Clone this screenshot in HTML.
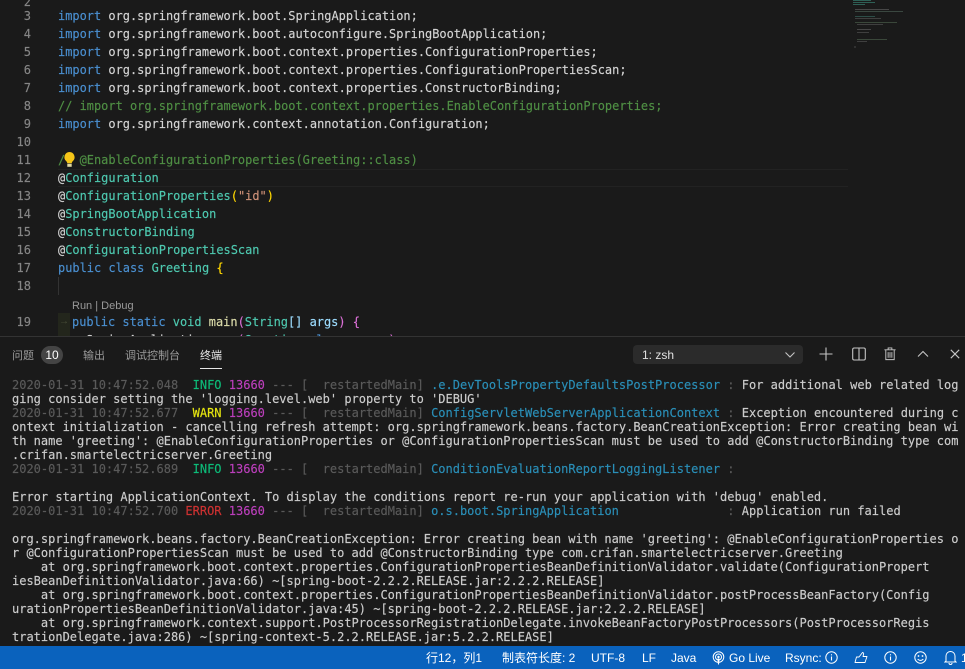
<!DOCTYPE html>
<html><head><meta charset="utf-8">
<style>
html,body{margin:0;padding:0;background:#1a1a1a;}
#r{position:relative;width:965px;height:669px;overflow:hidden;background:#1a1a1a;filter:blur(.3px);}
.m{font-family:"DejaVu Sans Mono","Liberation Mono",monospace;font-size:12px;white-space:pre;-webkit-text-stroke:.15px;}
.l{position:absolute;height:18px;line-height:18px;left:58px;color:#d4d4d4;font-size:11.96px;}
.n{position:absolute;left:0;width:31px;text-align:right;height:18px;line-height:18px;color:#858585;}
.k{color:#4a8fd0}.c{color:#4f8f44}.t{color:#4ec9b0}.y{color:#ffd700}.s{color:#ce9178}.f{color:#dcdcaa}.v{color:#9cdcfe}.p{color:#da70d6}
.u{font-family:"Liberation Sans","Noto Sans CJK SC",sans-serif;position:absolute;white-space:pre;}
.a{position:absolute;left:12px;height:14px;line-height:14px;color:#cccccc;}
.d{color:#5a5a5a}.i{color:#0dbc79}.wn{color:#e5e510}.e{color:#cd3131}.g{color:#bc3fbc}.b{color:#2a8fb8}
.st{position:absolute;top:647px;height:23px;line-height:23px;color:#fff;font-size:12px;}
svg{position:absolute;}
</style></head><body><div id="r">

<div class="n m" style="top:-7px">2</div>
<div class="n m" style="top:7px">3</div><div class="l m" style="top:7px"><span class="k">import</span> org.springframework.boot.SpringApplication;</div>
<div class="n m" style="top:25px">4</div><div class="l m" style="top:25px"><span class="k">import</span> org.springframework.boot.autoconfigure.SpringBootApplication;</div>
<div class="n m" style="top:43px">5</div><div class="l m" style="top:43px"><span class="k">import</span> org.springframework.boot.context.properties.ConfigurationProperties;</div>
<div class="n m" style="top:61px">6</div><div class="l m" style="top:61px"><span class="k">import</span> org.springframework.boot.context.properties.ConfigurationPropertiesScan;</div>
<div class="n m" style="top:79px">7</div><div class="l m" style="top:79px"><span class="k">import</span> org.springframework.boot.context.properties.ConstructorBinding;</div>
<div class="n m" style="top:97px">8</div><div class="l m c" style="top:97px">// import org.springframework.boot.context.properties.EnableConfigurationProperties;</div>
<div class="n m" style="top:115px">9</div><div class="l m" style="top:115px"><span class="k">import</span> org.springframework.context.annotation.Configuration;</div>
<div class="n m" style="top:133px">10</div>
<div class="n m" style="top:151px">11</div><div class="l m c" style="top:151px">/  @EnableConfigurationProperties(Greeting::class)</div>
<svg style="left:63px;top:151px" width="13" height="17" viewBox="0 0 13 17"><path d="M6.500 1a5.200 5.200 0 0 0-3.400 9c.8.8 1.100 1.400 1.100 2.300h4.600c0-.9.300-1.500 1.100-2.300a5.200 5.200 0 0 0-3.400-9z" fill="#f5c518"/><rect x="4.300" y="12.800" width="4.400" height="3" fill="#e0d8a0"/></svg>
<div style="position:absolute;left:58px;top:169px;width:790px;height:18px;box-sizing:border-box;border-top:1px solid #222;border-bottom:1px solid #222"></div>
<div class="n m" style="top:169px">12</div><div class="l m" style="top:169px">@<span class="t">Configuration</span></div>
<div class="n m" style="top:187px">13</div><div class="l m" style="top:187px">@<span class="t">ConfigurationProperties</span><span class="y">(</span><span class="s">"id"</span><span class="y">)</span></div>
<div class="n m" style="top:205px">14</div><div class="l m" style="top:205px">@<span class="t">SpringBootApplication</span></div>
<div class="n m" style="top:223px">15</div><div class="l m" style="top:223px">@<span class="t">ConstructorBinding</span></div>
<div class="n m" style="top:241px">16</div><div class="l m" style="top:241px">@<span class="t">ConfigurationPropertiesScan</span></div>
<div class="n m" style="top:259px">17</div><div class="l m" style="top:259px"><span class="k">public</span> <span class="k">class</span> <span class="t">Greeting</span> <span class="y">{</span></div>
<div class="n m" style="top:277px">18</div>
<div style="position:absolute;left:58px;top:277px;width:1px;height:18px;background:#333"></div>
<div class="u" style="left:72px;top:299px;font-size:11px;line-height:14px;color:#999">Run | Debug</div>
<div style="position:absolute;left:58px;top:313px;width:12px;height:23px;background:#23261c"></div>
<div class="u" style="left:59px;top:315px;font-size:10px;line-height:14px;color:#4a4f3a">→</div>
<div class="n m" style="top:313px">19</div><div class="l m" style="top:313px;left:72px"><span class="k">public</span> <span class="k">static</span> <span class="t">void</span> <span class="f">main</span><span class="p">(</span><span class="t">String</span><span class="v">[]</span> <span class="v">args</span><span class="p">)</span> <span class="p">{</span></div>
<div class="l m" style="top:331px;left:86px">SpringApplication.<span class="f">run</span><span class="p">(</span><span class="t">Greeting</span>.<span class="k">class</span>, <span class="v">args</span><span class="p">)</span>;</div>

<svg style="left:853px;top:0" width="56" height="50" viewBox="0 0 56 50">
<g opacity=".4">
<rect x="0" y="0" width="18" height="1" fill="#4ec9b0"/><rect x="0" y="2" width="22" height="1" fill="#4ec9b0"/><rect x="0" y="4" width="12" height="1" fill="#4ec9b0"/>
<rect x="2" y="9" width="34" height="1" fill="#8a8a8a"/><rect x="2" y="11" width="48" height="1" fill="#6a8a7a"/>
<rect x="2" y="16" width="20" height="1" fill="#4a9a8a"/><rect x="2" y="18" width="26" height="1" fill="#777"/>
<rect x="2" y="22" width="42" height="1" fill="#6a8a6a"/><rect x="4" y="24" width="26" height="1" fill="#777"/>
<rect x="4" y="29" width="14" height="1" fill="#888"/><rect x="4" y="32" width="12" height="1" fill="#777"/>
<rect x="4" y="39" width="30" height="1" fill="#6a8a6a"/><rect x="4" y="41" width="10" height="1" fill="#777"/>
<rect x="1" y="46" width="2" height="2" fill="#555"/>
</g></svg>

<div style="position:absolute;left:0;top:336px;width:965px;height:310px;background:#1a1a1a;border-top:1px solid #333;box-sizing:border-box"></div>

<div class="u" style="left:12px;top:348px;font-size:11px;line-height:16px;color:#9a9a9a">问题</div>
<div class="u" style="left:41px;top:346px;width:22px;height:18px;border-radius:9px;background:#444;color:#fff;font-size:12px;line-height:18px;text-align:center">10</div>
<div class="u" style="left:83px;top:348px;font-size:11px;line-height:16px;color:#9a9a9a">输出</div>
<div class="u" style="left:125px;top:348px;font-size:11px;line-height:16px;color:#9a9a9a">调试控制台</div>
<div class="u" style="left:200px;top:348px;font-size:11px;line-height:16px;color:#e7e7e7">终端</div>
<div style="position:absolute;left:200px;top:368px;width:22px;height:1px;background:#e7e7e7"></div>

<div style="position:absolute;left:633px;top:345px;width:170px;height:19px;border-radius:4px;background:#2b2b2b"></div>
<div class="u" style="left:642px;top:347px;font-size:12px;line-height:16px;color:#e0e0e0">1: zsh</div>
<svg style="left:784px;top:351px" width="12" height="8" viewBox="0 0 12 8"><path d="M1.500 1.500L6 6l4.500-4.500" fill="none" stroke="#c5c5c5" stroke-width="1.100"/></svg>
<svg style="left:819px;top:347px" width="14" height="14" viewBox="0 0 14 14"><path d="M7 .5v13M.5 7h13" stroke="#c5c5c5" stroke-width="1.100" fill="none"/></svg>
<svg style="left:852px;top:347px" width="14" height="14" viewBox="0 0 14 14"><rect x=".7" y="1" width="12.600" height="12" rx="1.500" fill="none" stroke="#c5c5c5" stroke-width="1.100"/><path d="M7 1v12" stroke="#c5c5c5" stroke-width="1.100"/></svg>
<svg style="left:884px;top:347px" width="12" height="14" viewBox="0 0 12 15"><path d="M0 3h12M4 3V1h4v2M1.500 3v10.500h9V3M4 5.500v6M6 5.500v6M8 5.500v6" fill="none" stroke="#c5c5c5" stroke-width="1"/></svg>
<svg style="left:917px;top:350px" width="12" height="8" viewBox="0 0 12 8"><path d="M1 6.500L6 1.500l5 5" fill="none" stroke="#c5c5c5" stroke-width="1.100"/></svg>
<svg style="left:950px;top:349px" width="10" height="10" viewBox="0 0 10 10"><path d="M.8.8l8.400 8.400M9.200.8L.8 9.200" fill="none" stroke="#c5c5c5" stroke-width="1.100"/></svg>

<div class="a m" style="top:378px"><span class="d">2020-01-31 10:47:52.048 </span> <span class="i">INFO</span> <span class="g">13660</span> <span class="d">--- [  restartedMain]</span> <span class="b">.e.DevToolsPropertyDefaultsPostProcessor</span> <span class="d">:</span> For additional web related log</div>
<div class="a m" style="top:392px">ging consider setting the 'logging.level.web' property to 'DEBUG'</div>
<div class="a m" style="top:406px"><span class="d">2020-01-31 10:47:52.677 </span> <span class="wn">WARN</span> <span class="g">13660</span> <span class="d">--- [  restartedMain]</span> <span class="b">ConfigServletWebServerApplicationContext</span> <span class="d">:</span> Exception encountered during c</div>
<div class="a m" style="top:420px">ontext initialization - cancelling refresh attempt: org.springframework.beans.factory.BeanCreationException: Error creating bean wi</div>
<div class="a m" style="top:434px">th name 'greeting': @EnableConfigurationProperties or @ConfigurationPropertiesScan must be used to add @ConstructorBinding type com</div>
<div class="a m" style="top:448px">.crifan.smartelectricserver.Greeting</div>
<div class="a m" style="top:462px"><span class="d">2020-01-31 10:47:52.689 </span> <span class="i">INFO</span> <span class="g">13660</span> <span class="d">--- [  restartedMain]</span> <span class="b">ConditionEvaluationReportLoggingListener</span> <span class="d">:</span></div>
<div class="a m" style="top:490px">Error starting ApplicationContext. To display the conditions report re-run your application with 'debug' enabled.</div>
<div class="a m" style="top:504px"><span class="d">2020-01-31 10:47:52.700 </span><span class="e">ERROR</span> <span class="g">13660</span> <span class="d">--- [  restartedMain]</span> <span class="b">o.s.boot.SpringApplication              </span> <span class="d">:</span> Application run failed</div>
<div class="a m" style="top:532px">org.springframework.beans.factory.BeanCreationException: Error creating bean with name 'greeting': @EnableConfigurationProperties o</div>
<div class="a m" style="top:546px">r @ConfigurationPropertiesScan must be used to add @ConstructorBinding type com.crifan.smartelectricserver.Greeting</div>
<div class="a m" style="top:560px">    at org.springframework.boot.context.properties.ConfigurationPropertiesBeanDefinitionValidator.validate(ConfigurationPropert</div>
<div class="a m" style="top:574px">iesBeanDefinitionValidator.java:66) ~[spring-boot-2.2.2.RELEASE.jar:2.2.2.RELEASE]</div>
<div class="a m" style="top:588px">    at org.springframework.boot.context.properties.ConfigurationPropertiesBeanDefinitionValidator.postProcessBeanFactory(Config</div>
<div class="a m" style="top:602px">urationPropertiesBeanDefinitionValidator.java:45) ~[spring-boot-2.2.2.RELEASE.jar:2.2.2.RELEASE]</div>
<div class="a m" style="top:616px">    at org.springframework.context.support.PostProcessorRegistrationDelegate.invokeBeanFactoryPostProcessors(PostProcessorRegis</div>
<div class="a m" style="top:630px">trationDelegate.java:286) ~[spring-context-5.2.2.RELEASE.jar:5.2.2.RELEASE]</div>

<div style="position:absolute;left:0;top:646px;width:965px;height:23px;background:#0a62bd"></div>
<div class="u st" style="left:426px">行12，列1</div>
<div class="u st" style="left:502px">制表符长度: 2</div>
<div class="u st" style="left:591px">UTF-8</div>
<div class="u st" style="left:642px">LF</div>
<div class="u st" style="left:671px">Java</div>
<svg style="left:712px;top:651px" width="13" height="14" viewBox="0 0 13 14"><g fill="none" stroke="#fff" stroke-width="1"><circle cx="6.500" cy="6" r="5.300"/><circle cx="6.500" cy="6" r="3"/></g><circle cx="6.500" cy="6" r="1.200" fill="#fff"/><path d="M5.500 7.500h2L7 13.500H6z" fill="#fff"/></svg>
<div class="u st" style="left:729px">Go Live</div>
<div class="u st" style="left:785px">Rsync:</div>
<svg style="left:825px;top:651px" width="13" height="13" viewBox="0 0 13 13"><circle cx="6.500" cy="6.500" r="5.700" fill="none" stroke="#fff"/><path d="M6.500 5.500v4M6.500 3.200v1.200" stroke="#fff" stroke-width="1.100"/></svg>
<svg style="left:854px;top:651px" width="14" height="13" viewBox="0 0 14 13"><path d="M1 11.500L2.500 6H5L8.500 1.500c1.200.2 1.300 1.200 1 2L9 5.500h4L11 11.500z" fill="none" stroke="#fff" stroke-width=".9" stroke-linejoin="round"/></svg>
<svg style="left:884px;top:651px" width="13" height="13" viewBox="0 0 13 13"><circle cx="6.500" cy="6.500" r="5.700" fill="none" stroke="#fff"/><path d="M6.500 5.500v4M6.500 3.200v1.200" stroke="#fff" stroke-width="1.100"/></svg>
<svg style="left:914px;top:651px" width="13" height="13" viewBox="0 0 13 13"><circle cx="6.500" cy="6.500" r="5.700" fill="none" stroke="#fff"/><circle cx="4.500" cy="5" r=".9" fill="#fff"/><circle cx="8.500" cy="5" r=".9" fill="#fff"/><path d="M3.700 8c1.300 1.800 4.300 1.800 5.600 0" fill="none" stroke="#fff"/></svg>
<svg style="left:944px;top:650px" width="13" height="15" viewBox="0 0 13 15"><path d="M2 11V6a4.500 4.500 0 0 1 9 0v5l1 1H1zM5 13a1.500 1.500 0 0 0 3 0" fill="none" stroke="#fff"/></svg>
<div class="u st" style="left:961px">1</div>
</div></body></html>
